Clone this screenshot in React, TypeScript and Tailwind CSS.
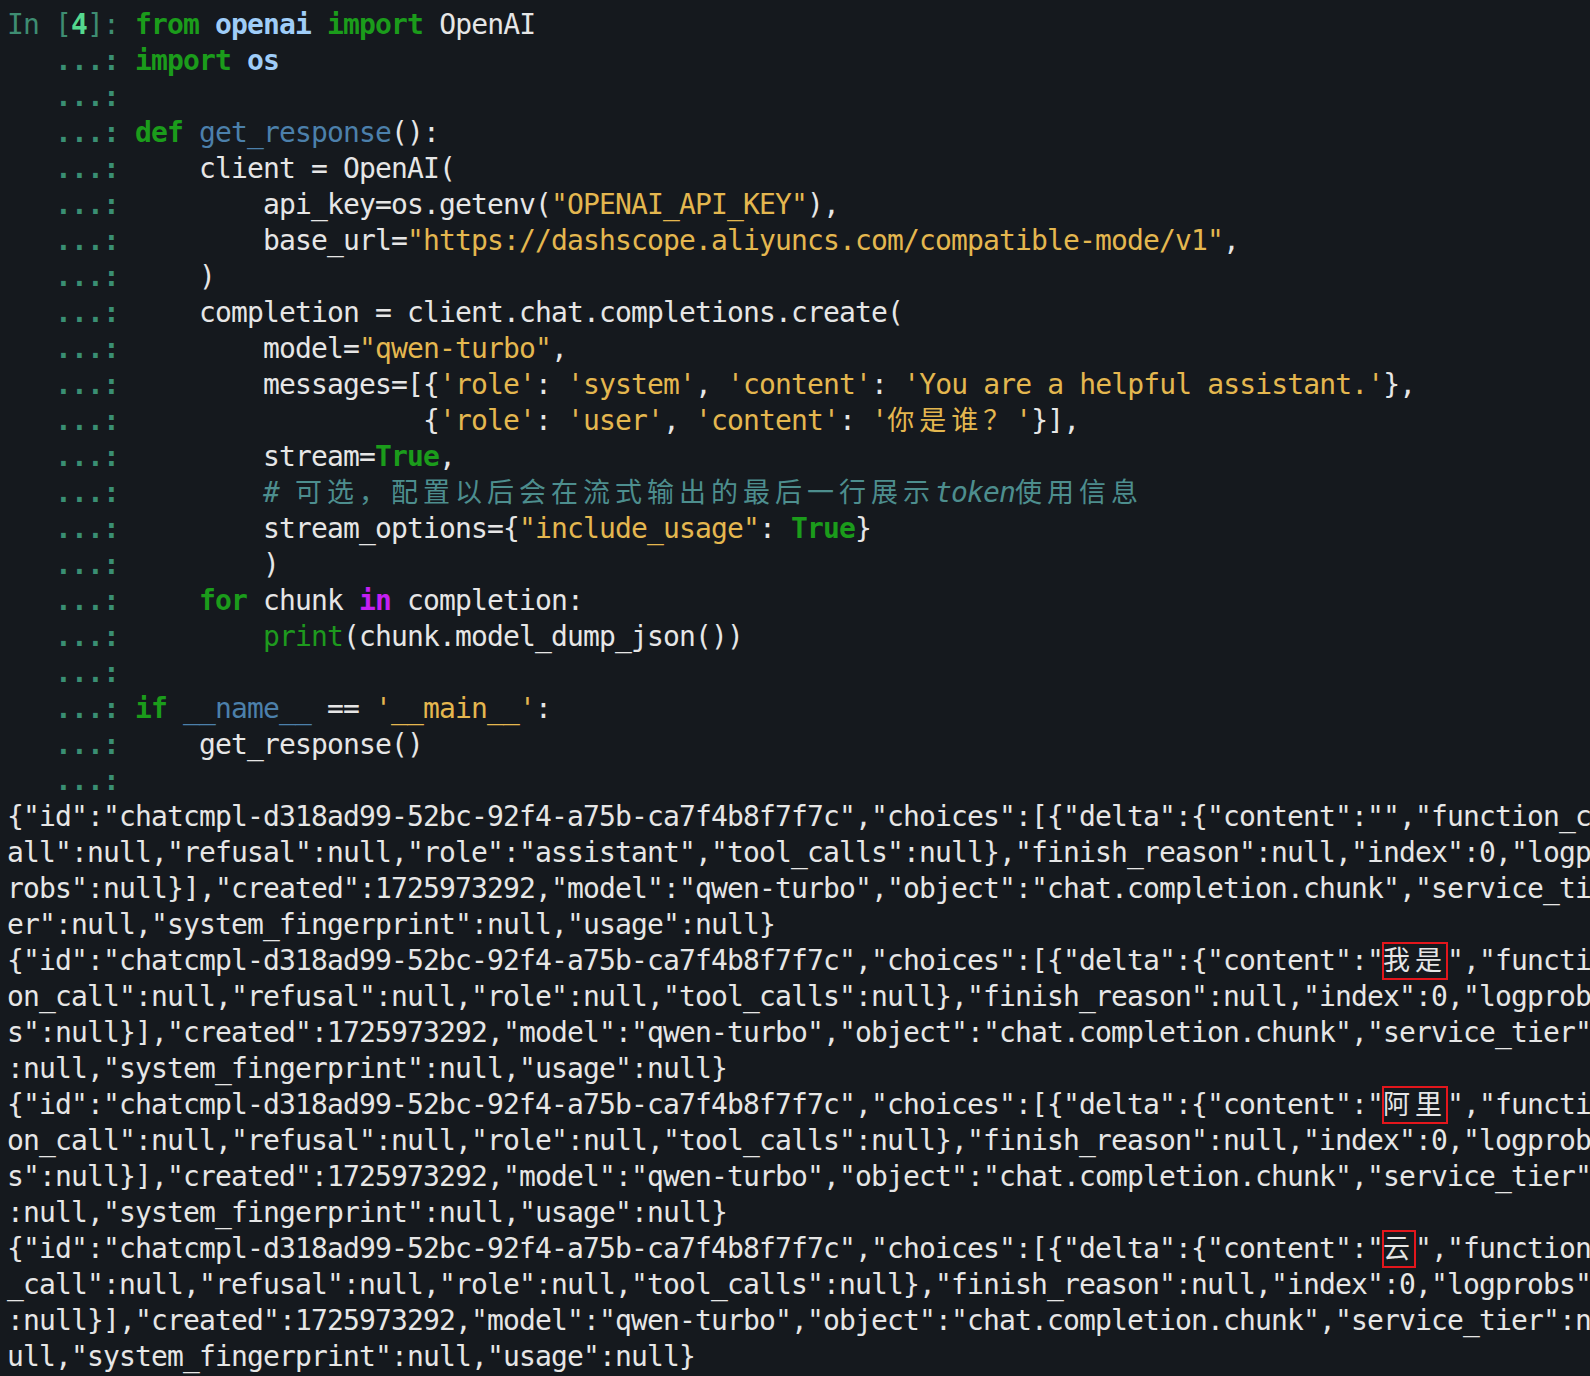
import React from 'react';

const WIDE = /[\u2e80-\ua4cf\uac00-\ud7a3\uf900-\ufaff\ufe30-\ufe4f\uff00-\uff60\uffe0-\uffe6]/;

// token classes
const P = 'text-[#3e8d72]';
const N = 'text-[#55d98f] font-bold';
const D = 'text-[#3a8f73] font-bold';
const K = 'text-[#1b9c1b] font-bold';
const M = 'text-[#9fcdf8] font-bold';
const F = 'text-[#4c80ab]';
const S = 'text-[#e4b74f]';
const B = 'text-[#1e9a1e]';
const I = 'text-[#c41ff2] font-bold';
const C = 'text-[#4d8e8e]';
const CI = 'text-[#4d8e8e] italic';

type Tok = string | [string, string];

const Txt = ({ s, cls }: { s: string; cls?: string }) => {
    const parts: React.ReactNode[] = [];
    let buf = '';
    let k = 0;
    for (const ch of s) {
        if (WIDE.test(ch)) {
            if (buf) parts.push(<span key={k++}>{buf}</span>);
            buf = '';
            parts.push(
                <span key={k++} className="inline-block w-[32px] text-left not-italic text-[27px] tracking-normal">
                    {ch}
                </span>
            );
        } else {
            buf += ch;
        }
    }
    if (buf) parts.push(<span key={k++}>{buf}</span>);
    return <span className={cls}>{parts}</span>;
};

const cont: Tok = [D, '   ...: '];

const code: Tok[][] = [
    [[P, 'In ['], [N, '4'], [P, ']: '], [K, 'from'], ' ', [M, 'openai'], ' ', [K, 'import'], ' OpenAI'],
    [cont, [K, 'import'], ' ', [M, 'os']],
    [cont],
    [cont, [K, 'def'], ' ', [F, 'get_response'], '():'],
    [cont, '    client = OpenAI('],
    [cont, '        api_key=os.getenv(', [S, '"OPENAI_API_KEY"'], '),'],
    [cont, '        base_url=', [S, '"https://dashscope.aliyuncs.com/compatible-mode/v1"'], ','],
    [cont, '    )'],
    [cont, '    completion = client.chat.completions.create('],
    [cont, '        model=', [S, '"qwen-turbo"'], ','],
    [cont, '        messages=[{', [S, "'role'"], ': ', [S, "'system'"], ', ', [S, "'content'"], ': ', [S, "'You are a helpful assistant.'"], '},'],
    [cont, '                  {', [S, "'role'"], ': ', [S, "'user'"], ', ', [S, "'content'"], ': ', [S, "'你是谁？'"], '}],'],
    [cont, '        stream=', [K, 'True'], ','],
    [cont, '        ', [CI, '# '], [C, '可选，配置以后会在流式输出的最后一行展示'], [CI, 'token'], [C, '使用信息']],
    [cont, '        stream_options={', [S, '"include_usage"'], ': ', [K, 'True'], '}'],
    [cont, '        )'],
    [cont, '    ', [K, 'for'], ' chunk ', [I, 'in'], ' completion:'],
    [cont, '        ', [B, 'print'], '(chunk.model_dump_json())'],
    [cont],
    [cont, [K, 'if'], ' ', [F, '__name__'], ' == ', [S, "'__main__'"], ':'],
    [cont, '    get_response()'],
    [cont],
];

type Seg = { t: string; box?: boolean };

const head = '{"id":"chatcmpl-d318ad99-52bc-92f4-a75b-ca7f4b8f7f7c","choices":[{"delta":{"content":"';
const tailFirst =
    '","function_call":null,"refusal":null,"role":"assistant","tool_calls":null},"finish_reason":null,"index":0,"logprobs":null}],"created":1725973292,"model":"qwen-turbo","object":"chat.completion.chunk","service_tier":null,"system_fingerprint":null,"usage":null}';
const tail =
    '","function_call":null,"refusal":null,"role":null,"tool_calls":null},"finish_reason":null,"index":0,"logprobs":null}],"created":1725973292,"model":"qwen-turbo","object":"chat.completion.chunk","service_tier":null,"system_fingerprint":null,"usage":null}';

const chunks: Seg[][] = [
    [{ t: head + tailFirst }],
    [{ t: head }, { t: '我是', box: true }, { t: tail }],
    [{ t: head }, { t: '阿里', box: true }, { t: tail }],
    [{ t: head }, { t: '云', box: true }, { t: tail }],
];

// terminal is 99 columns wide, CJK takes two
const wrap = (segs: Seg[], cols = 99): Seg[][] => {
    const lines: Seg[][] = [[]];
    let col = 0;
    for (const seg of segs) {
        let cur = '';
        for (const ch of seg.t) {
            const w = WIDE.test(ch) ? 2 : 1;
            if (col + w > cols) {
                if (cur) lines[lines.length - 1].push({ t: cur, box: seg.box });
                cur = '';
                lines.push([]);
                col = 0;
            }
            cur += ch;
            col += w;
        }
        if (cur) lines[lines.length - 1].push({ t: cur, box: seg.box });
    }
    return lines;
};

const output = chunks.flatMap((c) => wrap(c));

export default function App() {
    return (
        <div className="h-screen w-full overflow-hidden bg-[#15191e] pl-[7px] pt-[7px] font-['DejaVu_Sans_Mono','Noto_Sans_CJK_SC',monospace] text-[28px] tracking-[-0.857px] text-[#e6e6e6]">
            {code.map((line, i) => (
                <div key={i} className="h-9 leading-9 whitespace-pre">
                    {line.map((tok, j) =>
                        typeof tok === 'string' ? <Txt key={j} s={tok} /> : <Txt key={j} s={tok[1]} cls={tok[0]} />
                    )}
                </div>
            ))}
            {output.map((line, i) => (
                <div key={'o' + i} className="h-9 leading-9 whitespace-pre">
                    {line.map((seg, j) =>
                        seg.box ? (
                            <span
                                key={j}
                                className="inline-block align-top h-9 outline-2 outline-offset-[-1px] outline-[#e3161c]"
                            >
                                <Txt s={seg.t} />
                            </span>
                        ) : (
                            <Txt key={j} s={seg.t} />
                        )
                    )}
                </div>
            ))}
        </div>
    );
}
